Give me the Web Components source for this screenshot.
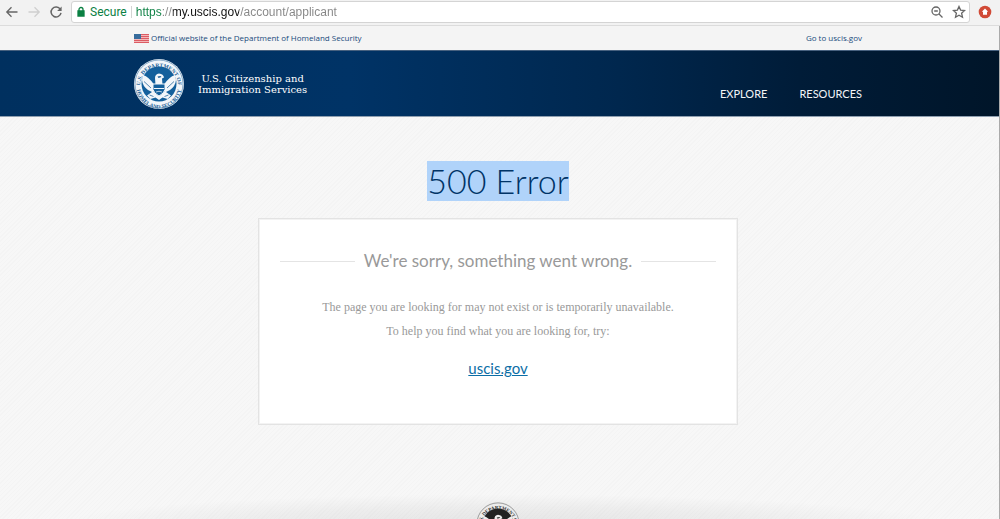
<!DOCTYPE html>
<html lang="en">
<head>
<meta charset="utf-8">
<title>500 Error</title>
<style>
body { margin: 0; }
</style>
</head>
<body>
<browser-window>
  <browser-toolbar slot="toolbar"></browser-toolbar>
  <gov-banner></gov-banner>
  <site-header></site-header>
  <error-page heading="500 Error">
    <span slot="title">We're sorry, something went wrong.</span>
    <span slot="reason">The page you are looking for may not exist or is temporarily unavailable.</span>
    <span slot="hint">To help you find what you are looking for, try:</span>
  </error-page>
  <site-footer></site-footer>
</browser-window>
<script>
function define(name, html) {
  const template = document.createElement('template');
  template.innerHTML = html;
  customElements.define(name, class extends HTMLElement {
    constructor() {
      super();
      this.attachShadow({ mode: 'open' }).append(template.content.cloneNode(true));
    }
    connectedCallback() {
      const h = this.shadowRoot.querySelector('[data-heading]');
      if (h) h.textContent = this.getAttribute('heading');
    }
  });
}

define('dhs-seal', `
<style>
:host { display: block; }
svg { display: block; width: 100%; height: auto; }
text { font-family: "Liberation Serif", serif; font-weight: 700; font-size: 11px; fill: var(--seal-ink); }
.paper { fill: var(--seal-paper); }
.ink { fill: var(--seal-ink); }
.disc { fill: var(--seal-disc); }
.line { fill: none; stroke: var(--seal-ink); }
.light { fill: none; stroke: var(--seal-paper); }
</style>
<svg viewBox="0 0 100 100" role="img" aria-label="Department of Homeland Security seal">
  <defs>
    <path id="top" d="M12 54 A38 38 0 1 1 88 54"/>
    <path id="bottom" d="M5 54 A45 45 0 0 0 95 54"/>
  </defs>
  <circle class="paper" cx="50" cy="50" r="50"/>
  <circle class="line" cx="50" cy="50" r="48" stroke-width="1"/>
  <circle class="disc" cx="50" cy="50" r="35"/>
  <text text-anchor="middle"><textPath href="#top" startOffset="50%">U.S. DEPARTMENT OF</textPath></text>
  <text text-anchor="middle"><textPath href="#bottom" startOffset="50%">HOMELAND SECURITY</textPath></text>
  <path class="paper" d="M18 32 Q30 36 40 51 L60 51 Q70 36 82 32 L84 42 Q83 54 72 62 L64 66 L74 73 L67 80 L57 77 L50 82 L43 77 L33 80 L26 73 L36 66 L28 62 Q17 54 16 42Z"/>
  <path class="line" d="M20 45 L34 58 M80 45 L66 58" stroke-width="1.5"/>
  <path class="paper" d="M43 52 L42 38 Q42 30 50 29 Q59 30 60 37 L56 39 L57 52Z"/>
  <path class="ink" d="M47 35 L53 34 L55 36 L49 38Z"/>
  <path class="disc" d="M38 50 H62 V61 Q60 69 50 74 Q40 69 38 61Z"/>
  <path class="light" d="M38 50 H62 V61 Q60 69 50 74 Q40 69 38 61Z M40 59 H60" stroke-width="2"/>
  <path class="light" d="M44 66 Q50 63 56 66" stroke-width="1.5"/>
  <path class="line" d="M31 72 L39 75 M69 72 L61 75" stroke-width="1.5"/>
</svg>`);

define('browser-toolbar', `
<style>
:host { display: flex; align-items: center; gap: 8px; height: 26px; padding: 0 8px 2px 5px; background: #f2f2f2; border-bottom: 1px solid #dcdcdc; box-sizing: border-box; flex: none; font: 12px/16px Roboto, sans-serif; }
button { display: block; padding: 0; border: 0; background: none; width: 14px; height: 14px; flex: none; }
svg { display: block; width: 14px; height: 14px; fill: none; stroke: #666; stroke-width: 1.3; }
.off svg { stroke: #cfcfcf; }
.box { display: flex; align-items: center; flex: 1; box-sizing: border-box; height: 22px; padding: 0 3px 0 3px; background: #fff; border: 1px solid #d4d4d4; border-radius: 3px; }
.lock svg { fill: #0b8043; stroke: #0b8043; width: 12px; height: 14px; }
.secure { color: #0b8043; padding: 0 4px 0 3px; border-right: 1px solid #d4d4d4; line-height: 12px; }
.lock { width: 12px; }
input { flex: 1; min-width: 0; border: 0; outline: 0; padding: 0 0 0 4px; height: 18px; font: 12px/16px "Liberation Sans", sans-serif;
  background: linear-gradient(90deg, #0b8043 0 30px, #888 30px 41px, #111 41px 107px, #858585 107px); -webkit-background-clip: text; background-clip: text; -webkit-text-fill-color: transparent; color: #333; }
.tools { display: flex; gap: 8px; }
.ext svg { stroke: none; }
</style>
<button aria-label="Back"><svg viewBox="0 0 14 14"><path d="M12.5 7H2M6.5 2.3L1.8 7l4.7 4.7"/></svg></button>
<button class="off" aria-label="Forward"><svg viewBox="0 0 14 14"><path d="M1.5 7H12M7.5 2.3L12.2 7l-4.7 4.7"/></svg></button>
<button aria-label="Reload"><svg viewBox="0 0 14 14"><path d="M11.3 4.3A5 5 0 1 0 12 7.8" stroke-width="1.5"/><path d="M12.6 1.5V6H8.1Z" fill="#666" stroke="none"/></svg></button>
<div class="box">
  <span class="lock"><svg viewBox="0 0 12 14"><path d="M3 6h6v5H3Z"/><path fill="none" d="M4 6V4.5a2 2 0 0 1 4 0V6"/></svg></span>
  <label class="secure" for="url">Secure</label>
  <input id="url" type="text" value="https://my.uscis.gov/account/applicant" spellcheck="false">
  <div class="tools">
    <button aria-label="Zoom"><svg viewBox="0 0 14 14"><circle cx="6" cy="6" r="4"/><path d="M4.2 6h3.6M9 9L12.5 12.5"/></svg></button>
    <button aria-label="Bookmark"><svg viewBox="0 0 14 14"><path d="M7 1.5l1.6 3.600 4 .4-3 2.700.9 4L7 10.200l-3.500 2 .9-4-3-2.700 4-.4Z"/></svg></button>
  </div>
</div>
<button class="ext" aria-label="Extension"><svg viewBox="0 0 14 14"><circle cx="7" cy="7" r="6.3" fill="#d14a36"/><path fill="#fff" d="M7 3.5l3.2 3.3H9v3H5v-3H3.8Z"/></svg></button>`);

define('gov-banner', `
<style>
:host { display: block; background: #f4f4f4; font: 8px/12px "Open Sans", sans-serif; }
.row { max-width: 728px; margin: 0 auto; height: 24px; display: flex; align-items: center; justify-content: space-between; }
.left { display: flex; align-items: center; gap: 2px; color: #204a7c; }
a { color: #204a7c; text-decoration: none; }
svg { display: block; width: 15px; height: 9px; }
</style>
<div class="row">
  <span class="left">
    <svg viewBox="0 0 30 18" aria-hidden="true"><path fill="#f3b7b8" d="M0 0h30v18H0z"/><path stroke="#dc5b63" stroke-width="2" d="M0 1h30M0 5h30M0 9h30M0 13h30M0 17h30"/><path fill="#376c9c" d="M0 0h14v10H0z"/></svg>
    <span>Official website of the Department of Homeland Security</span>
  </span>
  <a href="#uscis">Go to uscis.gov</a>
</div>`);

define('site-header', `
<style>
:host { display: block; background: linear-gradient(90deg, #00305f 0, #003366 35%, #00274e 62%, #001c38 80%, #001529 100%); border-top: 1px solid #47617f; border-bottom: 1px solid #8f9fb0; color: #fff; }
.row { max-width: 728px; margin: 0 auto; height: 65px; display: flex; align-items: center; }
dhs-seal { width: 50px; --seal-paper: #f2f6fa; --seal-ink: #1c5f96; --seal-disc: #14609c; }
.name { margin-left: 14px; text-align: center; font: 10px/11px "DejaVu Serif", serif; }
nav { margin-left: auto; display: flex; gap: 32px; padding-top: 21px; font: 11px/16px Lato, sans-serif; }
a { color: #f2f5f8; text-decoration: none; }
</style>
<div class="row">
  <dhs-seal></dhs-seal>
  <div class="name">U.S. Citizenship and<br>Immigration Services</div>
  <nav><a href="#explore">EXPLORE</a><a href="#resources">RESOURCES</a></nav>
</div>`);

define('error-page', `
<style>
:host { display: flex; flex-direction: column; align-items: center; padding: 44px 0 52px; }
h1 { margin: 0 0 17px; font: 300 34px/40px Lato, sans-serif; color: #003366; background: #b0d3fa; }
.card { box-sizing: border-box; width: 100%; max-width: 480px; background: #fff; border: 1px solid #e3e3e3; box-shadow: inset 0 0 0 1px #f3f3f3; padding: 30px 21px 44px; text-align: center; }
h2 { margin: 0; display: flex; align-items: center; gap: 9px; font: 400 17px/24px Lato, sans-serif; color: #999; }
h2::before, h2::after { content: ""; flex: 1; height: 1px; background: #e4e4e4; }
.text { padding: 22px 0 13px; font: 12px/24px "Liberation Serif", serif; color: #999; }
p { margin: 0; }
a { font: 15px/24px Lato, sans-serif; color: #0c6ea6; }
</style>
<h1 data-heading></h1>
<section class="card">
  <h2><slot name="title"></slot></h2>
  <div class="text"><p><slot name="reason"></slot></p><p><slot name="hint"></slot></p></div>
  <a href="#uscis">uscis.gov</a>
</section>`);

define('site-footer', `
<style>
:host { display: flex; justify-content: center; padding: 25px 0; background: radial-gradient(ellipse 45% 32px at 50% 49px, #00000014, #0000000a 60%, transparent); }
dhs-seal { width: 44px; --seal-paper: #ececec; --seal-ink: #333; --seal-disc: #222; }
</style>
<dhs-seal></dhs-seal>`);

define('browser-window', `
<style>
:host { display: flex; flex-direction: column; height: 100vh; overflow: hidden; }
.view { flex: 1; min-height: 0; overflow: hidden; border-right: 1px solid #aaa; background: repeating-linear-gradient(135deg, #f7f7f7 0 2px, #f4f4f4 2px 3px); }
::slotted(:not([slot])) { padding-right: 3px; }
</style>
<slot name="toolbar"></slot>
<div class="view"><slot></slot></div>`);
</script>
</body>
</html>
